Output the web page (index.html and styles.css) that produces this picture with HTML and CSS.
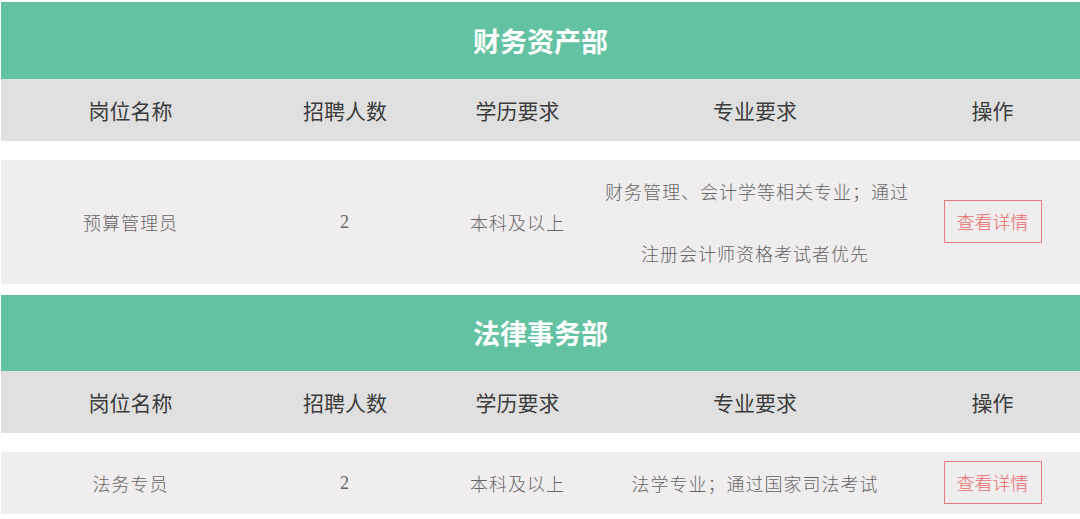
FILE: index.html
```html
<!DOCTYPE html>
<html lang="zh-CN">
<head>
<meta charset="utf-8">
<title>招聘岗位</title>
<link rel="stylesheet" href="styles.css">
</head>
<body>
<div class="page">
  <section class="dept">
    <h2 class="dept-title">财务资产部</h2>
    <div class="grid head">
      <div>岗位名称</div><div>招聘人数</div><div>学历要求</div><div>专业要求</div><div>操作</div>
    </div>
    <div class="grid row">
      <div>预算管理员</div>
      <div class="num">2</div>
      <div>本科及以上</div>
      <div class="major">财务管理、会计学等相关专业；通过<br>注册会计师资格考试者优先</div>
      <div class="op"><a class="btn">查看详情</a></div>
    </div>
  </section>
  <section class="dept">
    <h2 class="dept-title">法律事务部</h2>
    <div class="grid head">
      <div>岗位名称</div><div>招聘人数</div><div>学历要求</div><div>专业要求</div><div>操作</div>
    </div>
    <div class="grid row">
      <div>法务专员</div>
      <div class="num">2</div>
      <div>本科及以上</div>
      <div class="major">法学专业；通过国家司法考试</div>
      <div class="op"><a class="btn">查看详情</a></div>
    </div>
  </section>
</div>
</body>
</html>
```

FILE: styles.css
```css
html, body {
  margin: 0;
  padding: 0;
  background: #ffffff;
}
.page {
  padding: 2px 0 0 1px;
  font-family: "Noto Sans CJK SC", "Noto Sans", sans-serif;
}
.dept {
  margin-bottom: 11px;
}
.dept-title {
  margin: 0;
  height: 77px;
  line-height: 77px;
  background: #63c2a1;
  color: #ffffff;
  text-align: center;
  font-size: 27px;
  font-weight: 700;
}
.dept + .dept .dept-title {
  height: 76px;
  line-height: 76px;
}
.grid {
  display: grid;
  grid-template-columns: 259px 170px 175px 300px 175px;
  text-align: center;
}
.head {
  background: #e0e0e0;
  height: 62px;
  align-items: center;
  font-size: 21px;
  color: #3c3c3c;
  margin-bottom: 19px;
}
.row {
  background: #efeded;
  align-items: center;
  font-size: 18px;
  line-height: 62px;
  letter-spacing: 1px;
  color: #666666;
  font-weight: 300;
}
.major {
  white-space: nowrap;
}
.num {
  font-family: "Liberation Serif", serif;
}
.op {
  display: flex;
  justify-content: center;
  align-items: center;
  line-height: 1;
  padding-bottom: 1px;
}
.btn {
  display: block;
  border: 1px solid #e87b7b;
  color: #e86c6c;
  height: 41px;
  line-height: 41px;
  padding: 0 12px;
  letter-spacing: 0;
  font-size: 18px;
  cursor: pointer;
}
```
